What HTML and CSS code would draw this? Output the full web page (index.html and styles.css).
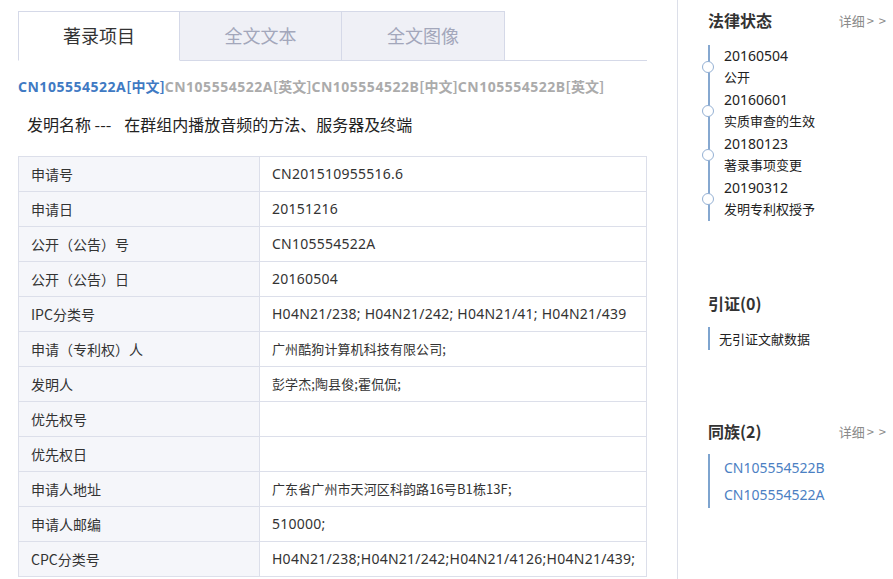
FILE: index.html
```html
<!DOCTYPE html>
<html lang="zh-CN">
<head>
<meta charset="utf-8">
<title>著录项目</title>
<link rel="stylesheet" href="styles.css">
</head>
<body>
<div class="page">
  <div class="main">
    <div class="tabs">
      <div class="tab active">著录项目</div>
      <div class="tab">全文文本</div>
      <div class="tab">全文图像</div>
    </div>
    <div class="pubs">
      <span class="pub cur">CN105554522A<span class="lang">[中文]</span></span><span class="pub">CN105554522A<span class="lang">[英文]</span></span><span class="pub">CN105554522B<span class="lang">[中文]</span></span><span class="pub">CN105554522B<span class="lang">[英文]</span></span>
    </div>
    <div class="title">发明名称 ---<span class="gap"></span>在群组内播放音频的方法、服务器及终端</div>
    <table class="info">
      <tr><td class="k">申请号</td><td class="v">CN201510955516.6</td></tr>
      <tr><td class="k">申请日</td><td class="v">20151216</td></tr>
      <tr><td class="k">公开（公告）号</td><td class="v">CN105554522A</td></tr>
      <tr><td class="k">公开（公告）日</td><td class="v">20160504</td></tr>
      <tr><td class="k">IPC分类号</td><td class="v">H04N21/238; H04N21/242; H04N21/41; H04N21/439</td></tr>
      <tr><td class="k">申请（专利权）人</td><td class="v cjk">广州酷狗计算机科技有限公司;</td></tr>
      <tr><td class="k">发明人</td><td class="v cjk">彭学杰;陶县俊;霍侃侃;</td></tr>
      <tr><td class="k">优先权号</td><td class="v"></td></tr>
      <tr><td class="k">优先权日</td><td class="v"></td></tr>
      <tr><td class="k">申请人地址</td><td class="v cjk">广东省广州市天河区科韵路16号B1栋13F;</td></tr>
      <tr><td class="k">申请人邮编</td><td class="v">510000;</td></tr>
      <tr><td class="k">CPC分类号</td><td class="v">H04N21/238;H04N21/242;H04N21/4126;H04N21/439;</td></tr>
    </table>
  </div>
  <div class="side">
    <div class="shead first"><span class="stitle">法律状态</span><span class="more">详细<span class="arr">&gt; &gt;</span></span></div>
    <ul class="timeline">
      <li class="event"><span class="dot"></span><div class="date">20160504</div><div class="desc">公开</div></li>
      <li class="event"><span class="dot"></span><div class="date">20160601</div><div class="desc">实质审查的生效</div></li>
      <li class="event"><span class="dot"></span><div class="date">20180123</div><div class="desc">著录事项变更</div></li>
      <li class="event"><span class="dot"></span><div class="date">20190312</div><div class="desc">发明专利权授予</div></li>
    </ul>
    <div class="shead cite-head"><span class="stitle">引证(0)</span></div>
    <div class="cite">无引证文献数据</div>
    <div class="shead fam-head"><span class="stitle">同族(2)</span><span class="more">详细<span class="arr">&gt; &gt;</span></span></div>
    <div class="family">
      <div class="famlink">CN105554522B</div>
      <div class="famlink">CN105554522A</div>
    </div>
  </div>
</div>
</body>
</html>
```
FILE: styles.css
```css
* { box-sizing: border-box; }
html, body { margin: 0; padding: 0; background: #fff; }
body {
  font-family: "Noto Sans", "Noto Sans CJK SC", sans-serif;
  color: #333;
  width: 893px;
  height: 579px;
  overflow: hidden;
}
.page {
  display: flex;
  height: 579px;
}
.main {
  width: 647px;
  padding: 11px 0 0 18px;
  flex: none;
}
.tabs {
  display: flex;
  height: 50px;
  border-bottom: 1px solid #d5d9e8;
}
.tab {
  width: 162px;
  height: 50px;
  border: 1px solid #d5d9e8;
  border-left: none;
  background: #eff0f6;
  color: #a3a7bb;
  font-family: "Noto Sans CJK SC", sans-serif;
  font-size: 18px;
  line-height: 47px;
  text-align: center;
}
.tab:nth-child(3) { width: 163px; }
.tab.active {
  background: #fff;
  color: #333;
  border-left: 1px solid #d5d9e8;
  border-bottom: 1px solid #fff;
  margin-bottom: -1px;
}
.pubs {
  margin-top: 15px;
  height: 20px;
  line-height: 20px;
  font-size: 14px;
  font-weight: bold;
  white-space: nowrap;
  letter-spacing: 0.5px;
}
.pub { color: #ababab; }
.pub.cur { color: #3f7ac3; }
.lang { font-family: "Noto Sans CJK SC", sans-serif; letter-spacing: 0; }
.title {
  margin-top: 17px;
  margin-left: 9px;
  height: 22px;
  line-height: 22px;
  font-size: 16px;
  font-family: "Noto Sans CJK SC", sans-serif;
  color: #222;
}
.gap { display: inline-block; width: 13px; }
.info {
  margin-top: 21px;
  width: 629px;
  border-collapse: collapse;
  font-size: 14px;
}
.info td {
  height: 35px;
  border: 1px solid #dcdfea;
  padding: 0 0 0 12px;
  line-height: 20px;
  color: #333;
}
.info td.k {
  width: 241px;
  background: #f5f6fa;
  font-family: "Noto Sans CJK SC", sans-serif;
}
.info td.v { color: #333; letter-spacing: 0.25px; }
.info td.cjk { font-family: "Noto Sans CJK SC", sans-serif; font-size: 13px; letter-spacing: 0.1px; }
.side {
  margin-left: 30px;
  border-left: 1px solid #dcdfe9;
  padding-left: 30px;
  flex: 1;
  font-family: "Noto Sans CJK SC", sans-serif;
}
.shead {
  display: flex;
  justify-content: space-between;
  align-items: center;
  height: 24px;
  padding-right: 6px;
}
.shead.first { margin-top: 8px; }
.stitle {
  font-size: 16px;
  font-weight: bold;
  color: #333;
}
.more {
  font-size: 13px;
  color: #8a8a8a;
}
.arr { margin-left: 2px; letter-spacing: 1px; }
.timeline {
  list-style: none;
  margin: 13px 0 0 0;
  padding: 0 0 0 14px;
  border-left: 2px solid #86a8d0;
  width: 140px;
}
.event {
  position: relative;
  height: 44px;
}
.dot {
  position: absolute;
  left: -22px;
  top: 16px;
  width: 12px;
  height: 12px;
  border: 1.5px solid #95b1d4;
  border-radius: 50%;
  background: #fff;
}
.date {
  font-family: "Noto Sans", sans-serif;
  font-size: 14px;
  line-height: 22px;
  color: #222;
}
.desc {
  font-size: 13px;
  line-height: 20px;
  color: #222;
}
.cite-head { margin-top: 70px; }
.cite {
  margin-top: 12px;
  height: 23px;
  line-height: 23px;
  border-left: 2px solid #7ea4cf;
  padding-left: 9px;
  font-size: 13px;
  color: #222;
}
.fam-head { margin-top: 69px; }
.family {
  margin-top: 11px;
  border-left: 2px solid #7ea4cf;
  padding-left: 14px;
}
.famlink {
  font-family: "Noto Sans", sans-serif;
  font-size: 14px;
  line-height: 27px;
  color: #4b80c3;
}
```
